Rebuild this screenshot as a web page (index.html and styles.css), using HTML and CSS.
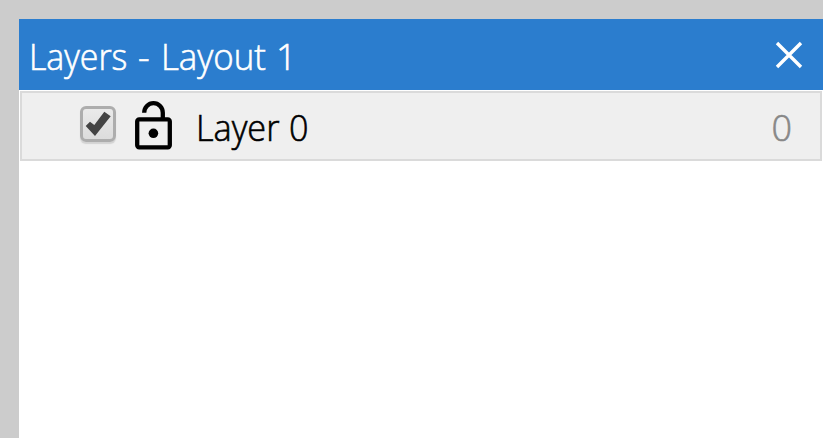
FILE: index.html
```html
<!DOCTYPE html>
<html lang="en">
<head>
<meta charset="utf-8">
<title>Layers - Layout 1</title>
<link rel="stylesheet" href="styles.css">
</head>
<body>
<main class="panel">
  <header class="titlebar">
    <h1 class="title"><span class="layers">Layers</span><span class="dash">-</span><span class="layout">Layout</span><span class="number">1</span></h1>
    <button class="close" aria-label="Close"><svg width="28" height="28" viewBox="0 0 28 28"><path d="M2 2 26 26M26 2 2 26" fill="none" stroke="#fff" stroke-width="3.400"/></svg></button>
  </header>
  <div class="row">
    <span class="check"><svg width="30" height="30" viewBox="0 0 30 30"><path d="M2.700 17 7 12.700 11.300 16 21.300 2.700 27.700 7.300 12 27Z" fill="#444"/></svg></span>
    <svg class="lock" width="37" height="50" viewBox="0 0 37 50"><rect x="2.200" y="18.400" width="32.600" height="27.900" rx="2" fill="none" stroke="#000" stroke-width="4.300"/><path d="M9.200 11.700a9.300 9.500 0 0 1 18.600 0V18" fill="none" stroke="#000" stroke-width="4.300"/><circle cx="18.400" cy="32.300" r="4.800"/></svg>
    <span class="name"><span class="layer">Layer</span><span class="zero">0</span></span>
    <span class="count">0</span>
  </div>
</main>
</body>
</html>
```
FILE: styles.css
```css
* { box-sizing: border-box; }
body { margin: 0; background: #ccc; font-family: "Open Sans", "Noto Sans", sans-serif; font-weight: 300; -webkit-text-stroke: .6px currentColor; }
.panel { margin: 19px 0 0 19px; height: 419px; background: #fff; overflow: hidden; }
.titlebar { height: 71px; background: #2b7dce; display: flex; justify-content: space-between; color: #fff; }
.title { margin: 13px 0 0 10px; font-size: 36px; line-height: 50px; font-weight: inherit; display: flex; }
.title span, .name span, .count { display: block; transform-origin: left; white-space: nowrap; }
.title .layers { width: 109px; transform: scaleX(.94); }
.title .dash { width: 23px; }
.title .layout { width: 115px; transform: scaleX(.968); }
.close { border: 0; background: none; padding: 0; margin: 22px 20px 0 0; height: 28px; }
.close svg { display: block; }
.row { height: 70px; margin: 1px 1px 0; border: 2px solid #dadada; background: #efefef; display: flex; align-items: flex-start; color: #000; }
.check { width: 36px; height: 36px; margin: 13px 0 0 58px; border: 3px solid #adadad; border-radius: 6px; background: linear-gradient(#eaeaea, #dcdcdc); box-shadow: 0 2px 1px #d3d3d3; flex: none; }
.check svg { display: block; }
.lock { margin: 8px 0 0 19px; flex: none; }
.name { margin: 10px 0 0 24px; font-size: 36px; line-height: 50px; display: flex; }
.name .layer { width: 93px; transform: scaleX(.95); }
.name .zero { transform: scaleX(.95); }
.count { margin: 10px 28px 0 auto; font-size: 36px; line-height: 50px; color: #888; }
```
